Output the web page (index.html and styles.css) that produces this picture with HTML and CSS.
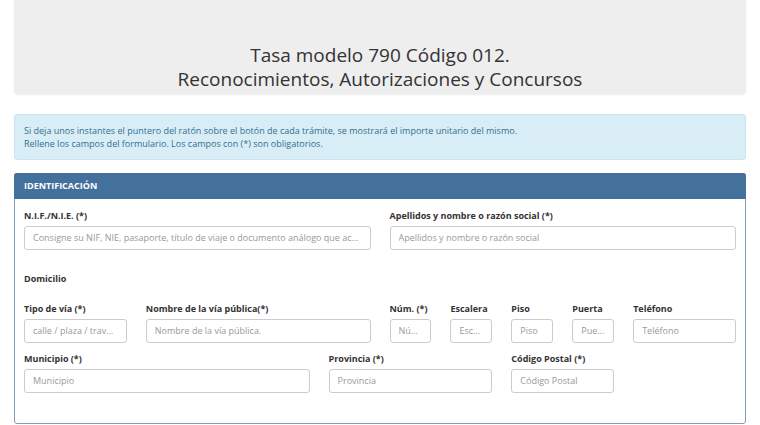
FILE: index.html
```html
<!DOCTYPE html>
<html lang="es">
<head>
    <meta charset="UTF-8">
    <meta name="viewport" content="width=device-width, initial-scale=1.0">
    <title>Tasa modelo 790 Código 012</title>
    <link rel="stylesheet" href="styles.css">
</head>
<body>
    <div class="page">
        <!-- Cabecera -->
        <div class="jumbo">
            <h1>Tasa modelo 790 Código 012.<br>Reconocimientos, Autorizaciones y Concursos</h1>
        </div>

        <!-- Aviso -->
        <div class="alert-info">
            Si deja unos instantes el puntero del ratón sobre el botón de cada trámite, se mostrará el importe unitario del mismo.<br>
            Rellene los campos del formulario. Los campos con (*) son obligatorios.
        </div>

        <!-- Identificación -->
        <div class="panel">
            <div class="panel-heading">IDENTIFICACIÓN</div>
            <div class="panel-body">
                <div class="row">
                    <div class="field span-6">
                        <label>N.I.F./N.I.E. (*)</label>
                        <input type="text" placeholder="Consigne su NIF, NIE, pasaporte, título de viaje o documento análogo que acr...">
                    </div>
                    <div class="field span-6">
                        <label>Apellidos y nombre o razón social (*)</label>
                        <input type="text" placeholder="Apellidos y nombre o razón social">
                    </div>
                </div>

                <div class="row">
                    <div class="field span-12">
                        <label class="section">Domicilio</label>
                    </div>
                </div>

                <div class="row">
                    <div class="field span-2">
                        <label>Tipo de vía (*)</label>
                        <input type="text" placeholder="calle / plaza / trave...">
                    </div>
                    <div class="field span-4">
                        <label>Nombre de la vía pública(*)</label>
                        <input type="text" placeholder="Nombre de la vía pública.">
                    </div>
                    <div class="field span-1">
                        <label>Núm. (*)</label>
                        <input type="text" placeholder="Nú...">
                    </div>
                    <div class="field span-1">
                        <label>Escalera</label>
                        <input type="text" placeholder="Esc...">
                    </div>
                    <div class="field span-1">
                        <label>Piso</label>
                        <input type="text" placeholder="Piso">
                    </div>
                    <div class="field span-1">
                        <label>Puerta</label>
                        <input type="text" placeholder="Pue...">
                    </div>
                    <div class="field span-2">
                        <label>Teléfono</label>
                        <input type="text" placeholder="Teléfono">
                    </div>
                </div>

                <div class="row">
                    <div class="field span-5">
                        <label>Municipio (*)</label>
                        <input type="text" placeholder="Municipio">
                    </div>
                    <div class="field span-3">
                        <label>Provincia (*)</label>
                        <input type="text" placeholder="Provincia">
                    </div>
                    <div class="field span-2">
                        <label>Código Postal (*)</label>
                        <input type="text" placeholder="Código Postal">
                    </div>
                </div>
            </div>
        </div>
    </div>
</body>
</html>
```

FILE: styles.css
```css
body {
    font-family: "Open Sans", Arial, sans-serif;
    margin: 0;
    padding: 0;
    background-color: #fff;
    color: #333;
}
.page {
    padding: 0 14px;
}
.jumbo {
    background-color: #eeeeee;
    border-radius: 0 0 4px 4px;
    box-shadow: 0 1px 2px rgba(0, 0, 0, 0.08);
    padding: 43px 20px 3px;
    height: 48px;
    text-align: center;
}
.jumbo h1 {
    margin: 0;
    font-size: 19px;
    font-weight: 400;
    line-height: 24px;
    color: #333;
}
.alert-info {
    margin-top: 20px;
    background-color: #d9edf7;
    border: 1px solid #c8e4f0;
    border-radius: 3px;
    color: #31708f;
    font-size: 9px;
    line-height: 13px;
    padding: 9px;
}
.panel {
    margin-top: 13px;
    border: 1px solid #7f9dbd;
    border-radius: 3px;
}
.panel-heading {
    background-color: #44709c;
    color: #fff;
    font-size: 9px;
    font-weight: 700;
    height: 26px;
    line-height: 26px;
    padding-left: 10px;
    margin: -1px -1px 0;
    border-radius: 3px 3px 0 0;
}
.panel-body {
    padding: 9.5px 9px 21px 9px;
}
.row {
    display: grid;
    grid-template-columns: repeat(12, 1fr);
    column-gap: 19px;
}
.span-1 { grid-column: span 1; }
.span-2 { grid-column: span 2; }
.span-3 { grid-column: span 3; }
.span-4 { grid-column: span 4; }
.span-5 { grid-column: span 5; }
.span-6 { grid-column: span 6; }
.span-12 { grid-column: span 12; }
.field {
    display: flex;
    flex-direction: column;
    min-width: 0;
    margin-bottom: 9px;
}
.field label {
    font-size: 9px;
    font-weight: 700;
    line-height: 13px;
    height: 13px;
    margin-bottom: 4px;
}
.field label.section {
    margin: 13px 0 8px;
}
.field input {
    box-sizing: border-box;
    width: 100%;
    height: 24px;
    border: 1px solid #cccccc;
    border-radius: 3px;
    padding: 0 8px;
    font-family: "Open Sans", Arial, sans-serif;
    font-size: 9px;
    color: #555;
    text-overflow: ellipsis;
}
.field input::placeholder {
    color: #999;
}
```
